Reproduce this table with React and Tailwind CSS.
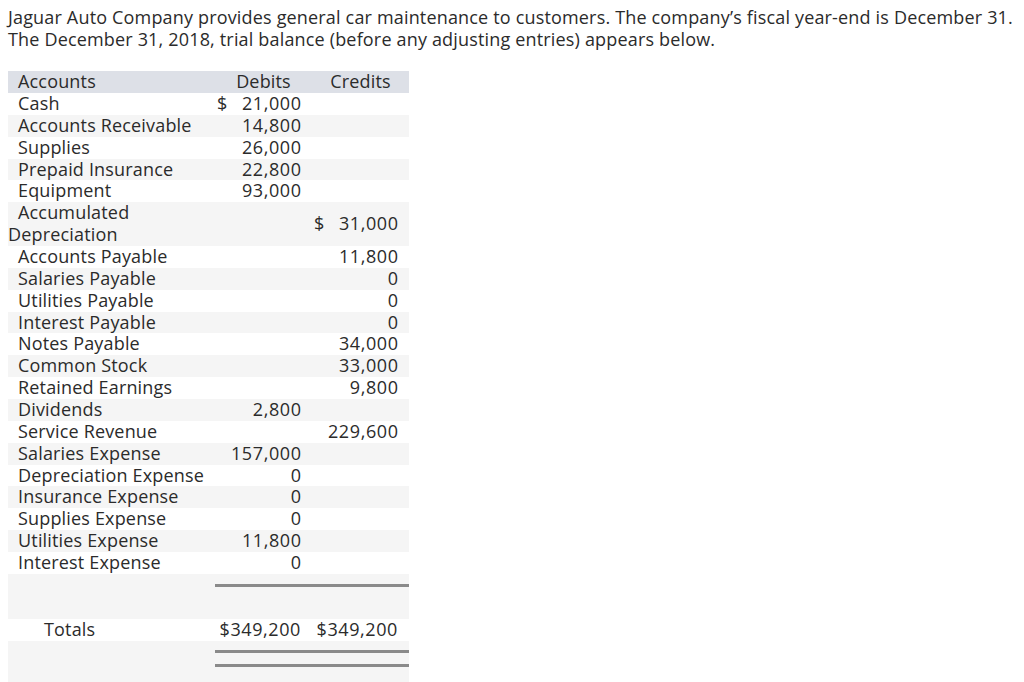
const rows = [
  { name: 'Cash', debit: '21,000', dollar: 'debit' },
  { name: 'Accounts Receivable', debit: '14,800' },
  { name: 'Supplies', debit: '26,000' },
  { name: 'Prepaid Insurance', debit: '22,800' },
  { name: 'Equipment', debit: '93,000' },
  { name: 'Accumulated Depreciation', credit: '31,000', dollar: 'credit' },
  { name: 'Accounts Payable', credit: '11,800' },
  { name: 'Salaries Payable', credit: '0' },
  { name: 'Utilities Payable', credit: '0' },
  { name: 'Interest Payable', credit: '0' },
  { name: 'Notes Payable', credit: '34,000' },
  { name: 'Common Stock', credit: '33,000' },
  { name: 'Retained Earnings', credit: '9,800' },
  { name: 'Dividends', debit: '2,800' },
  { name: 'Service Revenue', credit: '229,600' },
  { name: 'Salaries Expense', debit: '157,000' },
  { name: 'Depreciation Expense', debit: '0' },
  { name: 'Insurance Expense', debit: '0' },
  { name: 'Supplies Expense', debit: '0' },
  { name: 'Utilities Expense', debit: '11,800' },
  { name: 'Interest Expense', debit: '0' },
];

function Amount({ value, dollar }) {
  if (!value) return null;
  return (
    <div className="flex justify-between pl-[2px] pr-[11px] tracking-[0.6px]">
      <span>{dollar ? '$' : ''}</span>
      <span className="-mr-[0.6px]">{value}</span>
    </div>
  );
}

export default function App() {
  return (
    <div className="bg-white text-[#2b2b2b] font-['Open_Sans',sans-serif] text-[18px] leading-[22px] tracking-[0.17px] pl-2 pt-[6px]">
      <p>
        Jaguar Auto Company provides general car maintenance to customers. The company’s fiscal year-end is December 31.
        <br />
        The December 31, 2018, trial balance (before any adjusting entries) appears below.
      </p>

      <table className="mt-[21px] w-[401px] table-fixed leading-[21.86px]">
        <colgroup>
          <col className="w-[207px]" />
          <col className="w-[97px]" />
          <col className="w-[97px]" />
        </colgroup>
        <thead>
          <tr className="bg-[#dde0e7] h-[22px]">
            <th className="text-left font-normal indent-[10px]">Accounts</th>
            <th className="text-center font-normal">Debits</th>
            <th className="text-center font-normal">Credits</th>
          </tr>
        </thead>
        <tbody>
          {rows.map((r, i) => (
            <tr key={r.name} className={i % 2 === 1 ? 'bg-[#f5f5f5]' : 'bg-white'}>
              <td className="indent-[10px] align-middle">{r.name}</td>
              <td className="p-0 align-middle">
                <Amount value={r.debit} dollar={r.dollar === 'debit'} />
              </td>
              <td className="p-0 align-middle">
                <Amount value={r.credit} dollar={r.dollar === 'credit'} />
              </td>
            </tr>
          ))}
          <tr className="bg-[#f5f5f5] h-[45px]">
            <td></td>
            <td className="align-top pt-[10px]">
              <div className="h-[3px] bg-[#8a8a8a]"></div>
            </td>
            <td className="align-top pt-[10px]">
              <div className="h-[3px] bg-[#8a8a8a]"></div>
            </td>
          </tr>
          <tr className="bg-white h-[22px]">
            <td className="indent-[36px]">Totals</td>
            <td className="text-right pr-[11px] tracking-[0.6px]">$349,200</td>
            <td className="text-right pr-[11px] tracking-[0.6px]">$349,200</td>
          </tr>
          <tr className="bg-[#f5f5f5] h-[45px]">
            <td></td>
            <td className="align-top pt-[9px]">
              <div className="h-[3px] bg-[#8a8a8a]"></div>
              <div className="mt-[11px] h-[3px] bg-[#8a8a8a]"></div>
            </td>
            <td className="align-top pt-[9px]">
              <div className="h-[3px] bg-[#8a8a8a]"></div>
              <div className="mt-[11px] h-[3px] bg-[#8a8a8a]"></div>
            </td>
          </tr>
        </tbody>
      </table>
    </div>
  );
}
